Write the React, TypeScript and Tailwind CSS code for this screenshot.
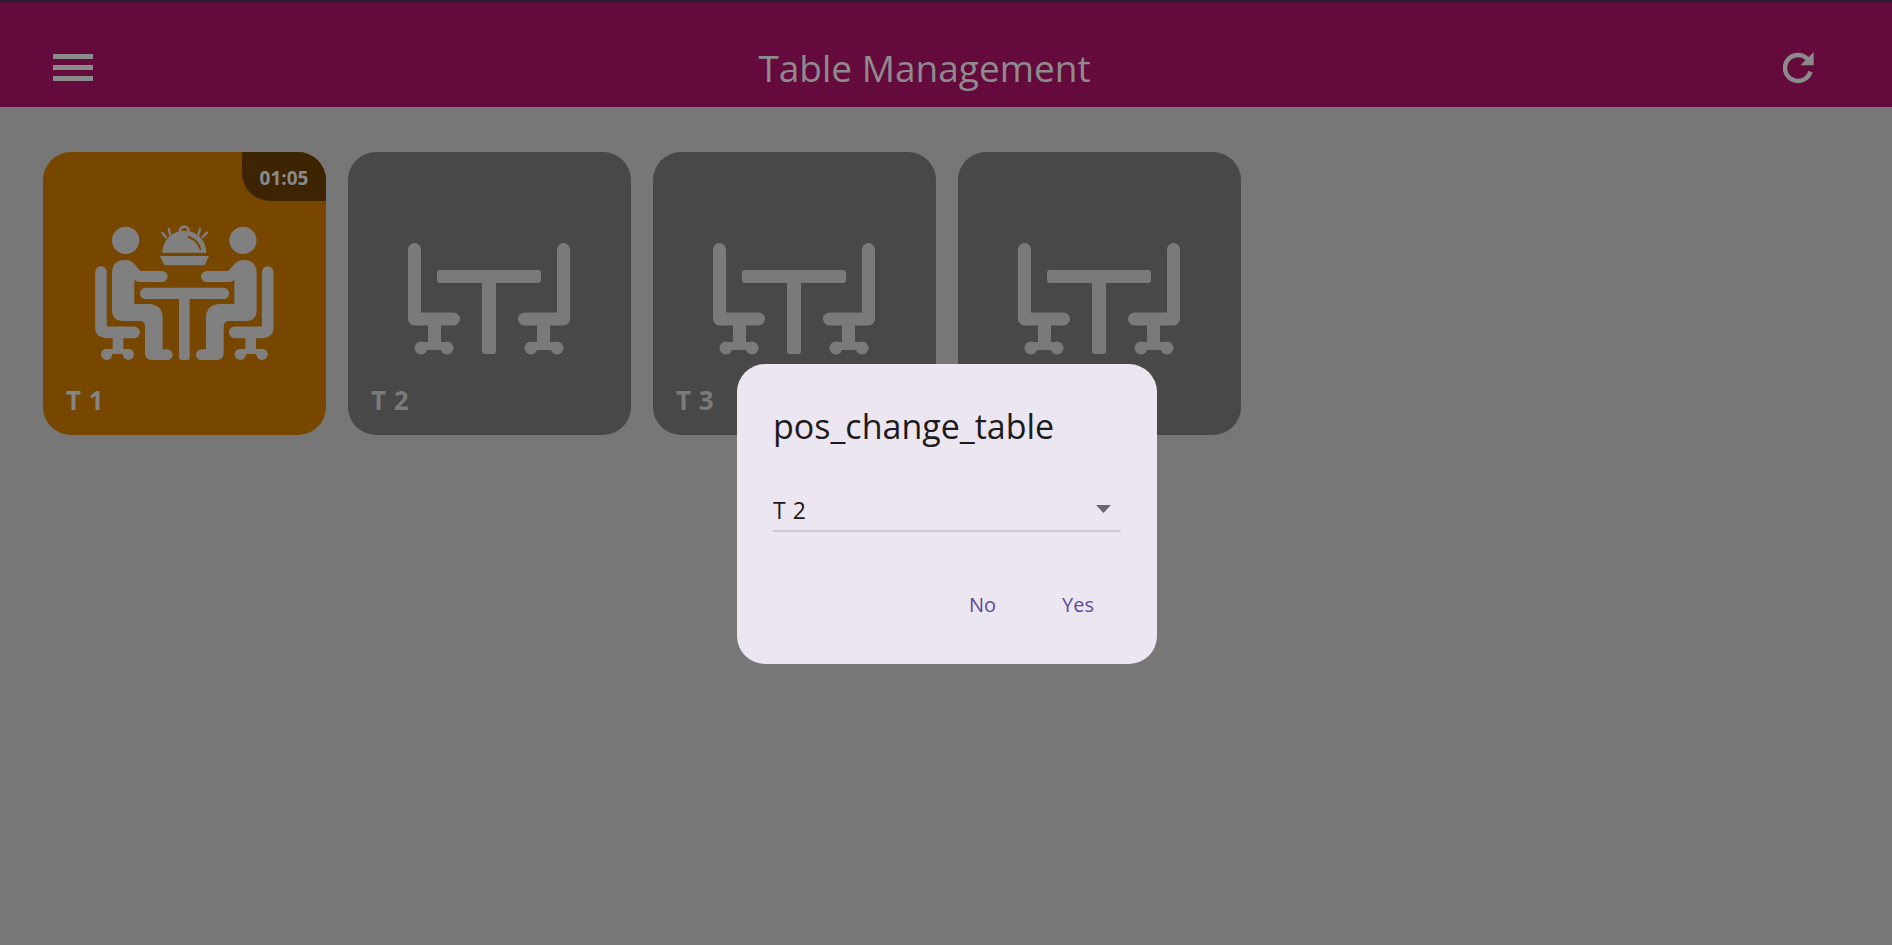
const font = "font-['Open_Sans','Noto_Sans',sans-serif]"

function MenuIcon() {
  return (
    <svg width="40" height="27" viewBox="0 0 40 27" fill="#8b8b8b">
      <rect x="0" y="0" width="40" height="5" />
      <rect x="0" y="11" width="40" height="5" />
      <rect x="0" y="22" width="40" height="5" />
    </svg>
  )
}

function RefreshIcon() {
  return (
    <svg width="32" height="32" viewBox="0 0 32 32" fill="none">
      <path d="M24.5 7 A13 13 0 1 0 27.5 19.5" stroke="#8b8b8b" strokeWidth="4.5" />
      <path d="M30.7 0 V13.3 H17.3 Z" fill="#8b8b8b" />
    </svg>
  )
}

function Chair() {
  return (
    <>
      <path d="M6.5 6.5 V76 H45.5" fill="none" stroke="#7a7a7a" strokeWidth="13" strokeLinecap="round" strokeLinejoin="round" />
      <rect x="20" y="80" width="13" height="22" />
      <rect x="13" y="99" width="26" height="8" />
      <circle cx="13" cy="105" r="6.5" />
      <circle cx="39" cy="105" r="6.5" />
    </>
  )
}

function EmptyTableIcon() {
  return (
    <svg width="162" height="112" viewBox="0 0 162 112" fill="#7a7a7a" className="mr-[2px]">
      <rect x="29" y="27" width="104" height="13" rx="3" />
      <rect x="74" y="36" width="14" height="75" rx="3" />
      <Chair />
      <g transform="translate(162 0) scale(-1 1)">
        <Chair />
      </g>
    </svg>
  )
}

function Diner() {
  return (
    <>
      <circle cx="107" cy="76" r="41" />
      <path d="M33 171 V338 Q33 352 50 352 H132" fill="none" stroke="#808080" strokeWidth="35" strokeLinecap="round" />
      <rect x="68" y="360" width="32" height="50" />
      <rect x="50" y="402" width="65" height="15" />
      <circle cx="50" cy="418" r="17" />
      <circle cx="115" cy="418" r="17" />
      <path d="M66 175 Q66 135 105 135 Q125 135 135 150 L152 168 H216 A16.5 16.5 0 0 1 216 201 H150 Q140 201 133 195 V267 H175 Q218 267 218 310 V403 H232 A16 16 0 0 1 232 435 H185 Q165 435 165 415 V335 Q165 318 148 318 H100 Q66 318 66 285 Z" />
    </>
  )
}

function BusyTableIcon() {
  return (
    <svg width="190" height="155" viewBox="0 0 570 465" fill="#808080">
      <Diner />
      <g transform="translate(566 0) scale(-1 1)">
        <Diner />
      </g>
      <rect x="150" y="218" width="267" height="34" rx="16" />
      <rect x="267" y="245" width="32" height="190" rx="8" />
      <path d="M210 123 H357 L346 146 Q344 151 338 151 H229 Q223 151 221 146 Z" />
      <path d="M217 113 A66 66 0 0 1 349 113 Z" />
      <circle cx="283" cy="48" r="13" fill="none" stroke="#808080" strokeWidth="8" />
      <path d="M296 66 Q322 74 331 102" fill="none" stroke="#774700" strokeWidth="6" strokeLinecap="round" />
      <g stroke="#808080" strokeWidth="7" strokeLinecap="round">
        <path d="M217 54 L228 67" />
        <path d="M236 42 L241 60" />
        <path d="M330 42 L325 60" />
        <path d="M351 53 L338 66" />
      </g>
    </svg>
  )
}

function TableCard({ name, time }: { name: string; time?: string }) {
  const busy = !!time
  return (
    <div
      className={`relative w-[283px] h-[283px] rounded-[28px] overflow-hidden flex flex-col items-center ${
        busy ? 'bg-[#774700] pt-[63px]' : 'bg-[#484848] pt-[91px]'
      }`}
    >
      {busy ? <BusyTableIcon /> : <EmptyTableIcon />}
      {time && (
        <div className="absolute top-0 right-0 w-[84px] h-[49px] bg-[#3c2400] rounded-bl-[28px] flex items-center justify-center pt-[3px] text-[19px] font-bold text-[#8a8a8a]">
          {time}
        </div>
      )}
      <span
        className={`absolute left-[23px] bottom-[18px] text-[26px] leading-[34px] font-bold tracking-[0.5px] ${
          busy ? 'text-[#858585]' : 'text-[#7a7a7a]'
        }`}
      >
        {name}
      </span>
    </div>
  )
}

export default function App() {
  return (
    <div className={`relative w-full h-[945px] overflow-hidden flex flex-col bg-[#777777] ${font}`}>
      <div className="h-[2px] bg-[#23232b]" />
      <header className="h-[105px] flex items-center bg-[#640a3c] pl-[53px] pr-[77px] pt-[26px]">
        <MenuIcon />
        <h1 className="flex-1 pr-[27px] text-center text-[37px] font-normal text-[#8f8a8d]">Table Management</h1>
        <RefreshIcon />
      </header>
      <main className="flex gap-[22px] pl-[43px] pt-[45px]">
        <TableCard name="T 1" time="01:05" />
        <TableCard name="T 2" />
        <TableCard name="T 3" />
        <TableCard name="T 4" />
      </main>

      <div className="absolute inset-0 flex justify-center items-start pt-[364px] pl-[2px]">
        <div className="w-[420px] h-[300px] rounded-[28px] bg-[#ece6f0] flex flex-col px-[36px] pt-[40px]">
          <h2 className="text-[34px] leading-[44px] font-normal text-[#1d1b20]">pos_change_table</h2>
          <div className="mt-[48px] h-[36px] flex items-center justify-between border-b-2 border-[#cfc8d6] pb-[5px]">
            <span className="text-[23px] tracking-[0.5px] text-[#1d1b20]">T 2</span>
            <svg width="15" height="8" viewBox="0 0 15 8" className="mr-[10px] mb-[3px]" fill="#6b6670">
              <path d="M0 0 H15 L7.5 8 Z" />
            </svg>
          </div>
          <div className="mt-[59px] flex justify-end gap-[66px] pr-[27px] text-[20px] leading-[28px] text-[#5c4b9b]">
            <span>No</span>
            <span>Yes</span>
          </div>
        </div>
      </div>
    </div>
  )
}
